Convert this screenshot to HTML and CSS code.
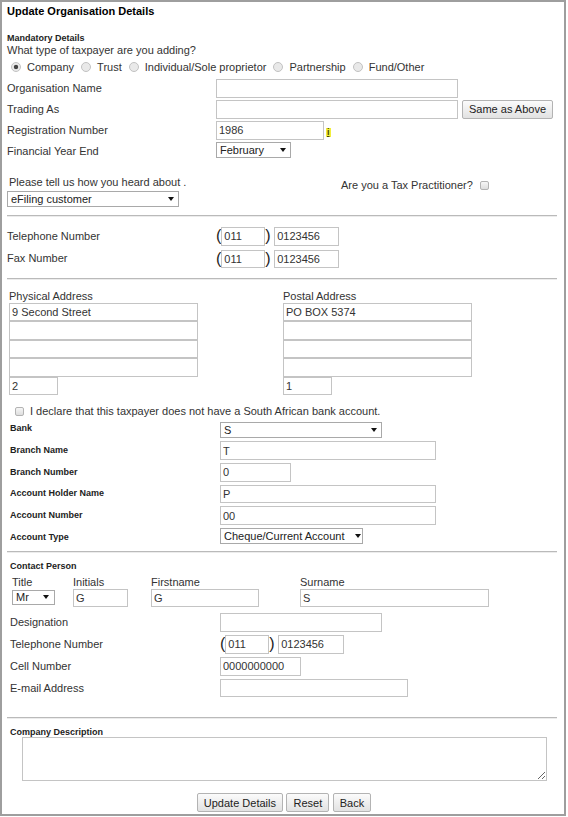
FILE: index.html
```html
<!DOCTYPE html>
<html lang="en">
<head>
  <meta charset="UTF-8">
  <meta name="viewport" content="width=device-width, initial-scale=1.0">
  <title>Update Organisation Details</title>
  <link rel="stylesheet" href="styles.css">
</head>
<body>
  <form class="page">
    <h1 class="title">Update Organisation Details</h1>
    <p class="small-head mandatory">Mandatory Details</p>
    <p class="question">What type of taxpayer are you adding?</p>
    <div class="radio-row">
      <label class="opt"><input type="radio" class="radio" name="ttype" checked>Company</label>
      <label class="opt"><input type="radio" class="radio" name="ttype">Trust</label>
      <label class="opt"><input type="radio" class="radio" name="ttype">Individual/Sole proprietor</label>
      <label class="opt"><input type="radio" class="radio" name="ttype">Partnership</label>
      <label class="opt"><input type="radio" class="radio" name="ttype">Fund/Other</label>
    </div>

    <div class="fields">
      <span class="lbl">Organisation Name</span>
      <div class="field"><input type="text" class="txt w242"></div>

      <span class="lbl">Trading As</span>
      <div class="field">
        <input type="text" class="txt w242">
        <button type="button" class="btn same">Same as Above</button>
      </div>

      <span class="lbl">Registration Number</span>
      <div class="field">
        <input type="text" class="txt w108" value="1986">
        <span class="info">i</span>
      </div>

      <span class="lbl">Financial Year End</span>
      <div class="field">
        <span class="sel w75 at-start"><select><option>February</option></select></span>
      </div>
    </div>

    <div class="heard">
      <div class="heard-left">
        <p class="heard-q">Please tell us how you heard about .</p>
        <span class="sel w172 heard-sel"><select><option>eFiling customer</option></select></span>
      </div>
      <label class="tax">Are you a Tax Practitioner? <input type="checkbox" class="check"></label>
    </div>

    <hr class="rule rule-1">

    <div class="phones">
      <span class="lbl">Telephone Number</span>
      <div class="field">
        <span class="paren">(</span><input type="text" class="txt w44" value="011"><span class="paren close">)</span><input type="text" class="txt w65" value="0123456">
      </div>
      <span class="lbl">Fax Number</span>
      <div class="field">
        <span class="paren">(</span><input type="text" class="txt w44" value="011"><span class="paren close">)</span><input type="text" class="txt w65" value="0123456">
      </div>
    </div>

    <hr class="rule rule-2">

    <div class="address">
      <div class="addr-col">
        <span class="addr-title">Physical Address</span>
        <input type="text" class="txt w189" value="9 Second Street">
        <input type="text" class="txt w189">
        <input type="text" class="txt w189">
        <input type="text" class="txt w189">
        <input type="text" class="txt w49" value="2">
      </div>
      <div class="addr-col">
        <span class="addr-title">Postal Address</span>
        <input type="text" class="txt w189" value="PO BOX 5374">
        <input type="text" class="txt w189">
        <input type="text" class="txt w189">
        <input type="text" class="txt w189">
        <input type="text" class="txt w49" value="1">
      </div>
    </div>

    <label class="declare"><input type="checkbox" class="check">I declare that this taxpayer does not have a South African bank account.</label>

    <div class="bank">
      <span class="lbl blbl">Bank</span>
      <div class="field">
        <span class="sel w162 at-end"><select><option>S</option></select></span>
      </div>
      <span class="lbl blbl">Branch Name</span>
      <div class="field"><input type="text" class="txt w216" value="T"></div>
      <span class="lbl blbl">Branch Number</span>
      <div class="field"><input type="text" class="txt w71" value="0"></div>
      <span class="lbl blbl">Account Holder Name</span>
      <div class="field"><input type="text" class="txt w216" value="P"></div>
      <span class="lbl blbl">Account Number</span>
      <div class="field"><input type="text" class="txt w216" value="00"></div>
      <span class="lbl blbl">Account Type</span>
      <div class="field">
        <span class="sel w143 at-start tight"><select><option>Cheque/Current Account</option></select></span>
      </div>
    </div>

    <hr class="rule rule-3">

    <p class="small-head contact-head">Contact Person</p>
    <div class="names">
      <span class="name-lbl">Title</span>
      <span class="name-lbl">Initials</span>
      <span class="name-lbl">Firstname</span>
      <span class="name-lbl">Surname</span>
      <div class="name-field">
        <span class="sel w43 title-sel"><select><option>Mr</option></select></span>
      </div>
      <div class="name-field"><input type="text" class="txt w55" value="G"></div>
      <div class="name-field"><input type="text" class="txt w108" value="G"></div>
      <div class="name-field"><input type="text" class="txt w189" value="S"></div>
    </div>

    <div class="contact">
      <span class="lbl">Designation</span>
      <div class="field"><input type="text" class="txt w162"></div>
      <span class="lbl">Telephone Number</span>
      <div class="field">
        <span class="paren">(</span><input type="text" class="txt w44" value="011"><span class="paren close">)</span><input type="text" class="txt w66" value="0123456">
      </div>
      <span class="lbl">Cell Number</span>
      <div class="field"><input type="text" class="txt w81" value="0000000000"></div>
      <span class="lbl">E-mail Address</span>
      <div class="field"><input type="text" class="txt w188"></div>
    </div>

    <hr class="rule rule-4">

    <p class="small-head desc-head">Company Description</p>
    <textarea class="desc"></textarea>

    <div class="actions">
      <button type="button" class="btn">Update Details</button>
      <button type="reset" class="btn">Reset</button>
      <button type="button" class="btn">Back</button>
    </div>
  </form>
</body>
</html>
```

FILE: styles.css
```css
body {
  margin: 0;
  background: #fff;
  font-family: "Liberation Sans", Arial, sans-serif;
  font-size: 11px;
  line-height: 13px;
  color: #333;
}

.page {
  width: 550px;
  padding: 3px 7px 1.5px 5px;
  border: 2px solid #9e9e9e;
}

.title {
  margin: 0;
  font-size: 11px;
  line-height: 13px;
  font-weight: bold;
  color: #000;
}
.small-head {
  margin: 0;
  font-size: 9px;
  line-height: 11px;
  font-weight: bold;
  color: #222;
}
.mandatory {
  margin-top: 15px;
}
.question {
  margin: 0;
}

/* taxpayer type radios */
.radio-row {
  display: flex;
  align-items: center;
  gap: 7px;
  height: 14px;
  margin-top: 3px;
  padding-left: 4px;
}
.opt {
  display: inline-flex;
  align-items: center;
  gap: 6px;
}
.radio {
  appearance: none;
  box-sizing: border-box;
  width: 10px;
  height: 10px;
  margin: 0;
  border: 1px solid #c2c2c2;
  border-radius: 50%;
  background: #e9e9e9;
}
.radio:checked {
  background: radial-gradient(circle, #444 0, #444 1.8px, #e9e9e9 2.6px);
}
.check {
  appearance: none;
  box-sizing: border-box;
  width: 9px;
  height: 9px;
  margin: 0;
  border: 1px solid #b3b3b3;
  border-radius: 2px;
  background: linear-gradient(#f6f6f6, #dedede);
}

/* label / field grids */
.fields,
.phones,
.bank,
.contact {
  display: grid;
  grid-template-columns: 209px 1fr;
  grid-auto-rows: 18.5px;
}
.fields {
  row-gap: 2.5px;
  margin-top: 5px;
}
.phones {
  row-gap: 4.2px;
  margin-top: 10px;
}
.bank {
  grid-template-columns: 210px 1fr;
  row-gap: 3.17px;
  margin-top: 1.5px;
  padding-left: 3px;
}
.contact {
  grid-template-columns: 210px 1fr;
  row-gap: 3.4px;
  margin-top: 5.8px;
  padding-left: 3px;
}
.lbl {
  display: flex;
  align-items: center;
}
.blbl {
  font-size: 9px;
  font-weight: bold;
  color: #222;
}
.field {
  display: flex;
  align-items: center;
}

.txt {
  box-sizing: border-box;
  height: 18.5px;
  margin: 0;
  padding: 0 2px;
  border: 1px solid #c4c4c4;
  border-radius: 0;
  background: #fff;
  font-family: "Liberation Sans", Arial, sans-serif;
  font-size: 11px;
  color: #333;
  outline: none;
}
.w242 { width: 242px; }
.w216 { width: 216px; }
.w189 { width: 189px; }
.w188 { width: 188px; }
.w172 { width: 172px; }
.w162 { width: 162px; }
.w143 { width: 143px; }
.w108 { width: 108px; }
.w81 { width: 81px; }
.w75 { width: 75px; }
.w71 { width: 71px; }
.w66 { width: 66px; }
.w65 { width: 65px; }
.w55 { width: 55px; }
.w49 { width: 49px; }
.w44 { width: 44px; }
.w43 { width: 43px; }

.btn {
  box-sizing: border-box;
  height: 19px;
  margin: 0;
  padding: 0 6px;
  border: 1px solid #b3b3b3;
  border-radius: 2px;
  background: linear-gradient(#fbfbfb, #e2e2e2);
  font-family: "Liberation Sans", Arial, sans-serif;
  font-size: 11px;
  color: #222;
}
.same {
  margin-left: 4px;
}
.info {
  align-self: flex-end;
  margin: 0 0 3px 2px;
  padding: 0 1px;
  background: #f2ee3c;
  color: #4a4a00;
  font-size: 9px;
  line-height: 9px;
  font-weight: bold;
  text-decoration: underline;
}

/* selects: native select, own arrow */
.sel {
  position: relative;
  display: inline-block;
  height: 16px;
}
.sel select {
  appearance: none;
  box-sizing: border-box;
  width: 100%;
  height: 16px;
  margin: 0;
  padding: 0 12px 0 3px;
  border: 1px solid #a9a9a9;
  border-radius: 0;
  background: #fff;
  font-family: "Liberation Sans", Arial, sans-serif;
  font-size: 11px;
  color: #222;
  outline: none;
}
.sel::after {
  content: "";
  position: absolute;
  top: 6px;
  right: 5px;
  border-left: 3px solid transparent;
  border-right: 3px solid transparent;
  border-top: 4px solid #111;
  pointer-events: none;
}
.sel.tight::after {
  right: 2px;
}
.at-start {
  align-self: flex-start;
}
.at-end {
  align-self: flex-end;
}

/* heard about / tax practitioner */
.heard {
  display: flex;
  margin-top: 15.5px;
}
.heard-left {
  width: 334px;
}
.heard-q {
  margin: 0;
  padding-left: 2px;
}
.heard-sel {
  margin-top: 2px;
}
.tax {
  display: flex;
  align-items: center;
  gap: 7px;
  height: 13px;
  padding-top: 3px;
}

.rule {
  height: 0;
  margin: 0;
  border: 0;
  border-top: 1px solid #bababa;
  border-bottom: 1px solid #ececec;
}
.rule-1 { margin-top: 8px; }
.rule-2 { margin-top: 9.5px; }
.rule-3 { margin-top: 4.5px; }
.rule-4 { margin-top: 20px; }

.paren {
  font-size: 16px;
  line-height: 18px;
  color: #222;
}
.paren.close {
  margin-right: 3.5px;
}

/* addresses */
.address {
  display: grid;
  grid-template-columns: 274px 1fr;
  margin-top: 10px;
  padding-left: 2px;
}
.addr-col {
  display: flex;
  flex-direction: column;
  align-items: flex-start;
}

.declare {
  display: flex;
  align-items: center;
  gap: 6.5px;
  height: 13px;
  margin-top: 10px;
  padding-left: 7.5px;
}

/* contact person */
.contact-head {
  margin-top: 8px;
  padding-left: 3px;
}
.names {
  display: grid;
  grid-template-columns: 61px 78px 149px 1fr;
  margin-top: 4px;
  padding-left: 5px;
}
.name-field {
  display: flex;
  align-items: flex-start;
}
.title-sel {
  height: 15px;
  margin-top: 1px;
}
.title-sel select {
  height: 15px;
}
.title-sel::after {
  top: 5.5px;
  right: 6px;
}

.desc-head {
  margin-top: 9px;
  padding-left: 3px;
  line-height: 9px;
}
.desc {
  display: block;
  box-sizing: border-box;
  width: 525px;
  height: 43.3px;
  margin: 0 0 0 15px;
  padding: 2px;
  border: 1px solid #c4c4c4;
  font-family: "Liberation Sans", Arial, sans-serif;
  font-size: 11px;
  outline: none;
}

.actions {
  display: flex;
  justify-content: center;
  gap: 3.5px;
  margin-top: 12.5px;
  padding-left: 4px;
}
```
